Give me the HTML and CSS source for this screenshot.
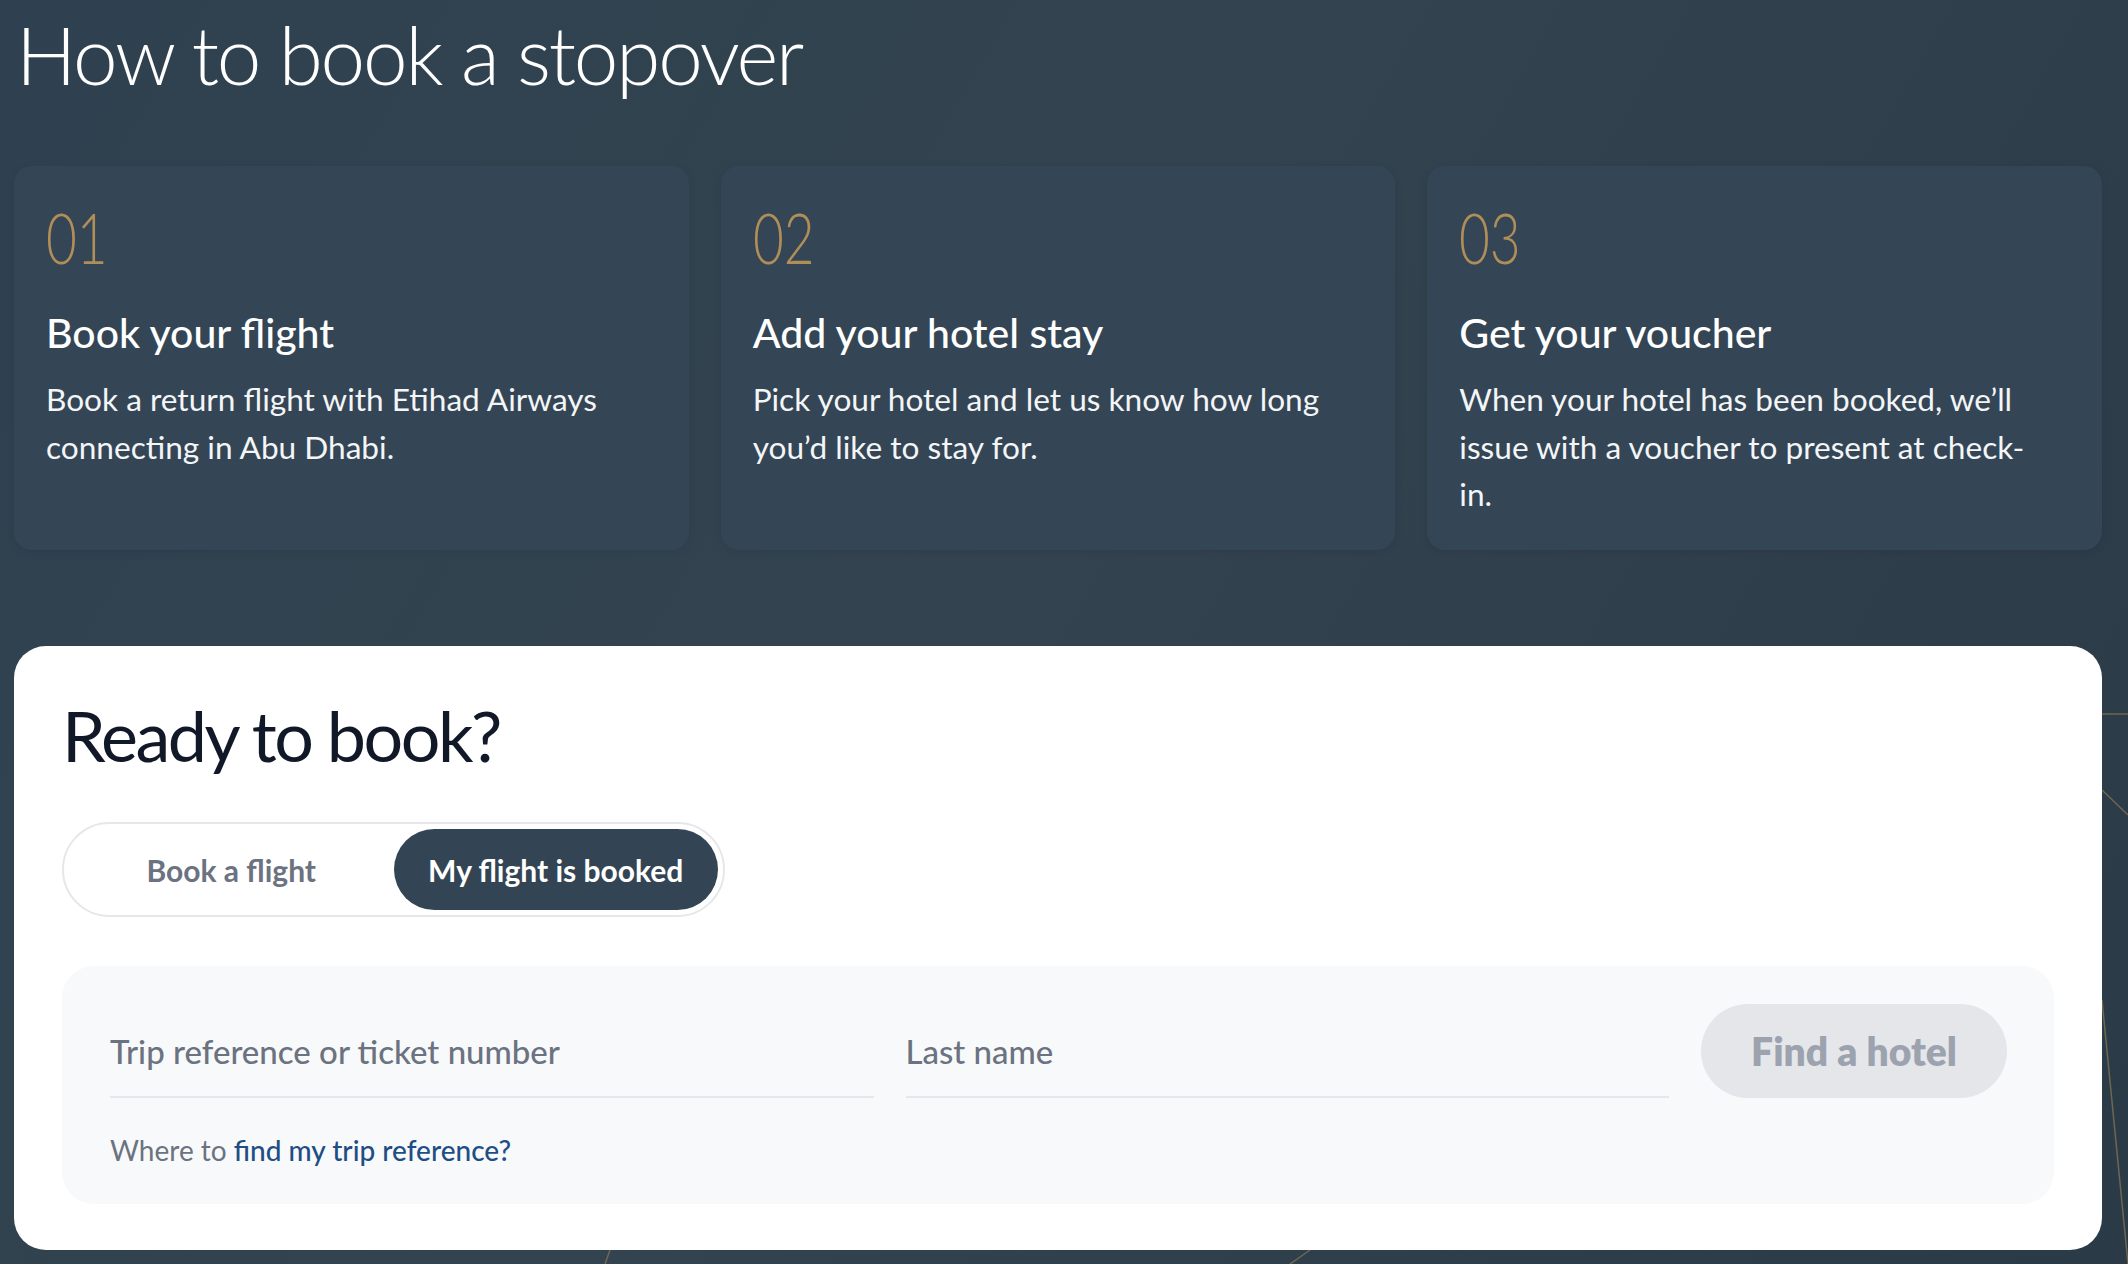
FILE: index.html
```html
<!DOCTYPE html>
<html lang="en">
<head>
<meta charset="utf-8">
<title>How to book a stopover</title>
<link rel="stylesheet" href="styles.css">
</head>
<body>
<main class="page">
  <svg class="bg-lines" viewBox="0 0 2128 1264" preserveAspectRatio="none" aria-hidden="true">
    <line x1="2102" y1="714" x2="2128" y2="714" />
    <line x1="2102" y1="790" x2="2128" y2="815" />
    <line x1="2102" y1="1000" x2="2128" y2="1264" />
    <line x1="605" y1="1264" x2="610" y2="1250" />
    <line x1="1290" y1="1264" x2="1310" y2="1250" />
  </svg>
  <h1 class="title">How to book a stopover</h1>

  <section class="steps">
    <article class="step">
      <div class="step-num">01</div>
      <h2 class="step-title">Book your flight</h2>
      <p class="step-text">Book a return flight with Etihad Airways connecting in Abu Dhabi.</p>
    </article>
    <article class="step">
      <div class="step-num">02</div>
      <h2 class="step-title">Add your hotel stay</h2>
      <p class="step-text">Pick your hotel and let us know how long you’d like to stay for.</p>
    </article>
    <article class="step">
      <div class="step-num">03</div>
      <h2 class="step-title">Get your voucher</h2>
      <p class="step-text">When your hotel has been booked, we’ll issue with a voucher to present at check-in.</p>
    </article>
  </section>

  <section class="book">
    <h2 class="book-title">Ready to book?</h2>
    <div class="toggle">
      <button class="toggle-btn">Book a flight</button>
      <button class="toggle-btn is-active">My flight is booked</button>
    </div>
    <form class="form">
      <div class="form-row">
        <label class="field"><span class="field-label">Trip reference or ticket number</span></label>
        <label class="field"><span class="field-label">Last name</span></label>
        <button type="button" class="find-btn">Find a hotel</button>
      </div>
      <p class="help">Where to <a href="#" class="help-link">find my trip reference?</a></p>
    </form>
  </section>
</main>
</body>
</html>
```

FILE: styles.css
```css
* { box-sizing: border-box; }
html, body { margin: 0; padding: 0; }
body {
  background: #2f3f4d;
  font-family: Lato, "Noto Sans", "Liberation Sans", sans-serif;
  color: #ffffff;
  width: 2128px;
  height: 1264px;
  overflow: hidden;
}
.page {
  position: relative;
  padding: 0 26px 0 14px;
  height: 1264px;
  background: linear-gradient(120deg, #2f4150 0%, #33434f 45%, #2b3a47 100%);
}
.bg-lines {
  position: absolute;
  inset: 0;
  width: 100%;
  height: 100%;
  pointer-events: none;
}
.bg-lines line { stroke: #8a7a55; stroke-width: 1.5; opacity: 0.7; }
.title {
  position: relative;
  margin: 0;
  padding: 4px 0 0 2px;
  font-weight: 300;
  font-size: 80px;
  line-height: 100px;
  letter-spacing: -2.2px;
  color: #ffffff;
  height: 166px;
}
.steps {
  position: relative;
  display: grid;
  grid-template-columns: repeat(3, 1fr);
  gap: 32px;
}
.step {
  background: #344655;
  border-radius: 18px;
  padding: 36px 56px 30px 32px;
  height: 384px;
  box-shadow: 0 2px 8px rgba(0,0,0,0.08);
}
.step-num {
  display: inline-block;
  color: #b08e58;
  font-weight: 300;
  font-size: 70px;
  line-height: 70px;
  transform: scaleX(0.76);
  transform-origin: left center;
}
.step-title {
  margin: 36px 0 0;
  font-size: 41px;
  font-weight: 500;
  line-height: 50px;
  color: #ffffff;
}
.step-text {
  margin: 18px 0 0;
  font-size: 31.6px;
  line-height: 47.5px;
  color: #f3f5f7;
}
.book {
  position: relative;
  margin-top: 96px;
  background: #ffffff;
  border-radius: 32px;
  padding: 44px 48px 48px;
  height: 604px;
}
.book-title {
  margin: 0;
  font-size: 70px;
  font-weight: 400;
  line-height: 90px;
  color: #111827;
  letter-spacing: -2.5px;
}
.toggle {
  margin-top: 42px;
  display: inline-flex;
  border: 2px solid #e5e7eb;
  border-radius: 999px;
  padding: 5px;
  width: 663px;
  height: 95px;
}
.toggle-btn {
  flex: 1;
  border: 0;
  background: transparent;
  border-radius: 999px;
  font-family: inherit;
  font-size: 30px;
  font-weight: 700;
  color: #6b7280;
  padding: 0;
}
.toggle-btn.is-active {
  background: #334554;
  color: #ffffff;
}
.form {
  margin-top: 49px;
  background: #f8f9fb;
  border-radius: 32px;
  padding: 38px 47px 34px 48px;
}
.form-row {
  display: flex;
  gap: 32px;
  align-items: stretch;
}
.field {
  flex: 1;
  height: 94px;
  display: flex;
  align-items: center;
  border-bottom: 2px solid #e5e7eb;
  padding-top: 2px;
}
.field-label {
  font-size: 33px;
  font-weight: 500;
  color: #6b7280;
}
.find-btn {
  width: 306px;
  height: 94px;
  border: 0;
  border-radius: 999px;
  background: #e4e6ea;
  color: #9ca3af;
  font-family: inherit;
  font-size: 39px;
  font-weight: 800;
  padding-bottom: 2px;
}
.help {
  margin: 32px 0 0;
  font-size: 28px;
  line-height: 40px;
  color: #6b7280;
}
.help-link {
  color: #1f4e85;
  font-weight: 500;
  text-decoration: none;
}
```
